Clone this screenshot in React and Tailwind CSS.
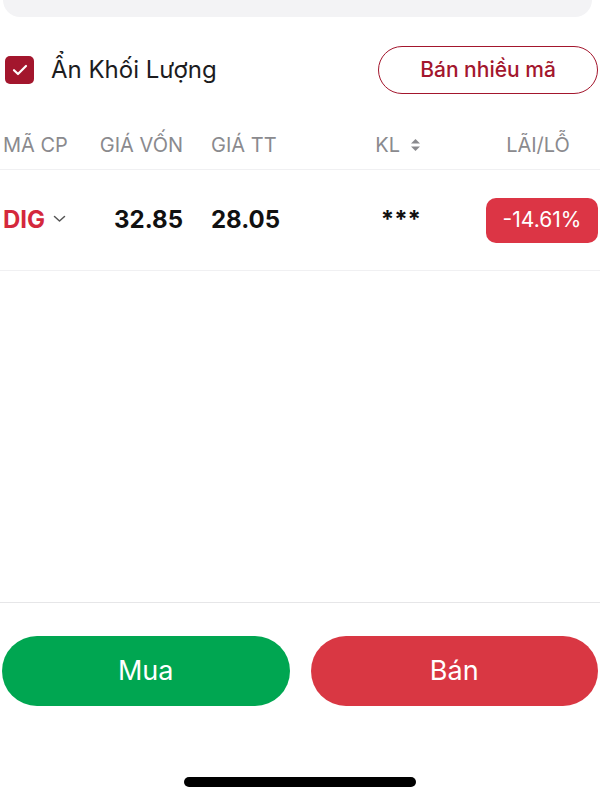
import React from "react";

export default function App() {
  const font = { fontFamily: "Inter, 'Noto Sans', sans-serif" };
  return (
    <div className="w-[600px] h-[800px] bg-white flex flex-col overflow-hidden" style={font}>
      {/* top card remnant */}
      <div className="ml-[3px] mr-[8px] h-[17px] bg-[#f3f3f5] rounded-b-[18px]" />

      {/* filter row */}
      <div className="mt-[29px] h-[48px] flex items-center pl-[5px] pr-[2px]">
        <div className="w-[29px] h-[28px] rounded-[5px] bg-[#a3162d] flex items-center justify-center">
          <svg width="16" height="12" viewBox="0 0 16 12" fill="none">
            <path d="M2 6.2 L6 10 L14 2" stroke="white" strokeWidth="2.2" strokeLinecap="round" strokeLinejoin="round" />
          </svg>
        </div>
        <span className="ml-[17px] text-[24px] text-[#1c1c1e]">Ẩn Khối Lượng</span>
        <button className="ml-auto w-[220px] h-[48px] rounded-full border-[1.5px] border-[#a3162d] text-[#a3162d] text-[21px] font-medium flex items-center justify-center">
          Bán nhiều mã
        </button>
      </div>

      {/* header */}
      <div className="mt-[26px] h-[50px] flex items-center pl-[3px] pr-[2px] border-b border-[#f0f0f2] text-[20px] text-[#8a8a8e]">
        <div className="w-[96px]">MÃ CP</div>
        <div className="w-[84px] text-right whitespace-nowrap">GIÁ VỐN</div>
        <div className="ml-[28px] w-[70px] whitespace-nowrap">GIÁ TT</div>
        <div className="w-[140px] flex items-center justify-end gap-[10px]">
          <span>KL</span>
          <svg width="11" height="14" viewBox="0 0 11 14">
            <path d="M5.5 1 L10 5.5 H1 Z" fill="#8a8a8e" />
            <path d="M5.5 13 L10 8.5 H1 Z" fill="#8a8a8e" />
          </svg>
        </div>
        <div className="ml-auto w-[112px] text-center pr-[8px]">LÃI/LỖ</div>
      </div>

      {/* row */}
      <div className="h-[101px] flex items-center pl-[3px] pr-[2px] border-b border-[#f0f0f2]">
        <div className="w-[96px] flex items-center">
          <span className="text-[24px] font-bold text-[#d4283c]">DIG</span>
          <svg width="13" height="8" viewBox="0 0 13 8" className="ml-[8px] mb-[2px]">
            <path d="M1.5 1.5 L6.5 6 L11.5 1.5" stroke="#555" strokeWidth="1.5" fill="none" strokeLinecap="round" strokeLinejoin="round" />
          </svg>
        </div>
        <div className="w-[84px] text-right text-[24px] font-bold text-[#111]">32.85</div>
        <div className="ml-[28px] w-[70px] text-[24px] font-bold text-[#111]">28.05</div>
        <div className="w-[140px] text-right text-[24px] font-bold text-[#111]">***</div>
        <div className="ml-auto w-[112px] h-[45px] rounded-[10px] bg-[#dc3545] flex items-center justify-center text-white text-[21px]">
          -14.61%
        </div>
      </div>

      <div className="flex-1" />

      {/* bottom actions */}
      <div className="border-t border-[#e6e6e8] pt-[33px] flex gap-[21px] px-[2px]">
        <button className="flex-1 h-[70px] rounded-full bg-[#00a651] text-white text-[27px]">Mua</button>
        <button className="flex-1 h-[70px] rounded-full bg-[#d93743] text-white text-[27px]">Bán</button>
      </div>

      <div className="mt-[71px] mb-[13px] flex justify-center">
        <div className="w-[232px] h-[10px] rounded-full bg-black" />
      </div>
    </div>
  );
}
